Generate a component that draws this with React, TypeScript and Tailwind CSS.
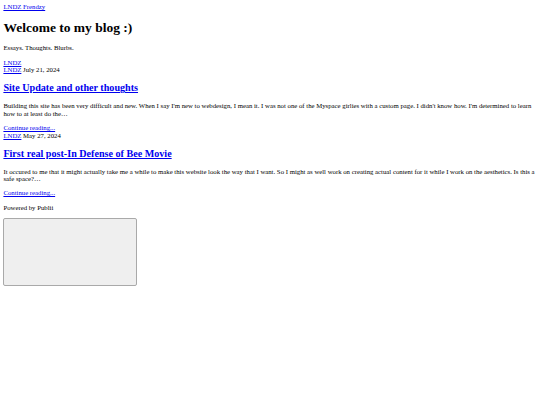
export default function App() {
  const link = "text-[#0000ee] underline";
  return (
    <div className="min-h-[405px] bg-white p-[3.4px] font-['Liberation_Serif',serif] text-[6.75px] leading-[1.12] text-black">
      <header>
        <a href="#" className={link}>LNDZ Frendzy</a>
        <h1 className="my-[9px] text-[13.5px] font-bold leading-[1.15]">Welcome to my blog :)</h1>
        <p className="my-[6.75px]">Essays. Thoughts. Blurbs.</p>
      </header>

      <main>
        <div>
          <a href="#" className={link}>LNDZ</a>
        </div>

        <article>
          <div>
            <a href="#" className={link}>LNDZ</a> July 21, 2024
          </div>
          <h2 className="my-[8.4px] text-[10.125px] font-bold leading-[1.15]">
            <a href="#" className={link}>Site Update and other thoughts</a>
          </h2>
          <p className="my-[6.75px]">
            Building this site has been very difficult and new. When I say I'm new to webdesign, I mean it. I was not one of the Myspace girlies with a custom page. I didn't know how. I'm determined to learn how to at least do the…
          </p>
          <a href="#" className={link}>Continue reading...</a>
        </article>

        <article>
          <div>
            <a href="#" className={link}>LNDZ</a> May 27, 2024
          </div>
          <h2 className="my-[8.4px] text-[10.125px] font-bold leading-[1.15]">
            <a href="#" className={link}>First real post-In Defense of Bee Movie</a>
          </h2>
          <p className="my-[6.75px]">
            It occured to me that it might actually take me a while to make this website look the way that I want. So I might as well work on creating actual content for it while I work on the aesthetics. Is this a safe space?…
          </p>
          <a href="#" className={link}>Continue reading...</a>
        </article>
      </main>

      <footer>
        <p className="my-[6.75px]">Powered by Publii</p>
        <div className="h-[68px] w-[134px] rounded-[2px] border border-[#a9a9a9] bg-[#efefef]" />
      </footer>
    </div>
  );
}
